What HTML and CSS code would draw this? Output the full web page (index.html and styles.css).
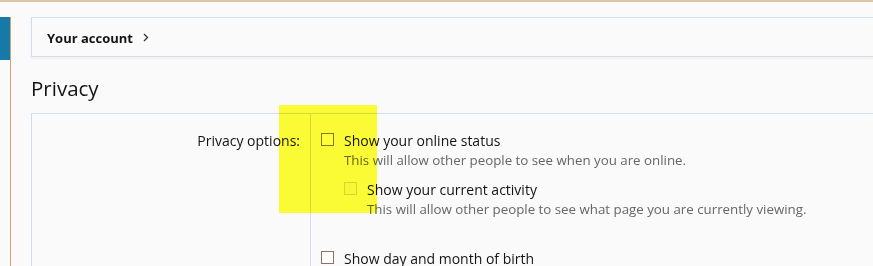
FILE: index.html
```html
<!DOCTYPE html>
<html lang="en">
<head>
<meta charset="utf-8">
<title>Privacy</title>
<link rel="stylesheet" href="styles.css">
</head>
<body>
<div class="topline"></div>
<div class="page">
  <aside class="side"><div class="side-tab"></div></aside>
  <main class="main">
    <nav class="crumbs">
      <span class="crumb">Your account</span>
      <svg class="chev" width="6" height="9" viewBox="0 0 6 9"><path d="M1 1l3.5 3.5L1 8" fill="none" stroke="#333" stroke-width="1.3"/></svg>
    </nav>
    <h1 class="title">Privacy</h1>
    <div class="form">
      <div class="row">
        <div class="row-label">Privacy options:</div>
        <div class="row-input">
          <ul class="choices">
            <li class="choice">
              <label class="check"><span class="box"></span><span class="text">Show your online status</span></label>
              <div class="hint">This will allow other people to see when you are online.</div>
              <ul class="choices nested">
                <li class="choice disabled">
                  <label class="check"><span class="box"></span><span class="text">Show your current activity</span></label>
                  <div class="hint">This will allow other people to see what page you are currently viewing.</div>
                </li>
              </ul>
            </li>
            <li class="choice spaced">
              <label class="check"><span class="box"></span><span class="text">Show day and month of birth</span></label>
            </li>
          </ul>
        </div>
      </div>
    </div>
  </main>
</div>
<div class="highlight"></div>
</body>
</html>
```
FILE: styles.css
```css
html, body {
  margin: 0;
  padding: 0;
  background: #fafafa;
  overflow: hidden;
  height: 266px;
}
body {
  font-family: "Open Sans", "Noto Sans", sans-serif;
  color: #141414;
  position: relative;
}
.topline {
  height: 2px;
  background: #dcc7a2;
}
.page {
  display: flex;
  padding-top: 15px;
  min-height: 300px;
}
.side {
  width: 10px;
  flex: none;
  border-right: 1px solid #d3a473;
}
.side-tab {
  height: 43px;
  background: #1779a7;
}
.main {
  flex: 1;
  margin-left: 20px;
  margin-right: -20px;
  min-width: 0;
}
.crumbs {
  display: flex;
  align-items: center;
  gap: 10px;
  height: 18px;
  padding: 11px 15px 9px;
  border: 1px solid #d3dde8;
  box-shadow: 0 2px 3px rgba(0, 0, 0, 0.05);
  background: #fafafa;
}
.crumb {
  font-size: 13px;
  font-weight: 700;
  line-height: 18px;
  color: #141414;
}
.chev {
  display: block;
  margin-top: -1px;
}
.title {
  margin: 16px 0 10px;
  font-size: 20.5px;
  font-weight: 400;
  line-height: 30px;
  color: #141414;
}
.form {
  border: 1px solid #d3dde8;
  min-height: 200px;
}
.row {
  display: flex;
}
.row-label {
  width: 268px;
  flex: none;
  padding: 17px 10px 0 0;
  text-align: right;
  font-size: 14px;
  line-height: 20px;
}
.row-input {
  flex: 1;
  border-left: 1px solid #d3dde8;
  padding: 17px 10px 0;
  min-height: 200px;
}
.choices {
  list-style: none;
  margin: 0;
  padding: 0;
}
.nested {
  margin-top: 11px;
  margin-left: 23px;
}
.spaced {
  margin-top: 31px;
}
.check {
  display: flex;
  align-items: flex-start;
  gap: 10px;
  font-size: 14px;
  line-height: 20px;
}
.box {
  width: 11px;
  height: 11px;
  flex: none;
  margin-top: 2px;
  border: 1px solid #8f7166;
  background: #fff;
}
.disabled .box {
  border-color: #d6d6d6;
  background: #f7f7f7;
}
.hint {
  margin-left: 23px;
  font-size: 13.3px;
  line-height: 18px;
  color: #666;
}
.highlight {
  position: absolute;
  left: 279px;
  top: 105px;
  width: 98px;
  height: 108px;
  background: #ffff36;
  mix-blend-mode: multiply;
}
```
